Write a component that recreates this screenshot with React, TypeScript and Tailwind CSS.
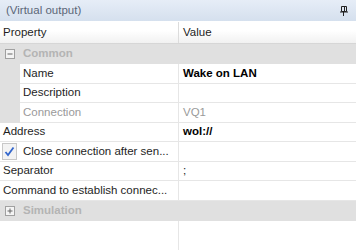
import React from 'react'

type Row = {
  label: string
  value?: string
  bold?: boolean
  indent?: boolean
  dim?: boolean
  check?: boolean
}

const font = { fontFamily: '"Liberation Sans", Arial, sans-serif' }

function Group({ label, open }: { label: string; open: boolean }) {
  return (
    <div className="flex h-[20px] items-center bg-[#e0e0e0] pl-[5px]">
      <span className="flex h-[10px] w-[10px] items-center justify-center border border-[#a0a0a0] bg-[#f4f4f4]">
        <svg width="8" height="8" viewBox="0 0 8 8">
          <path d="M1.5 4h5" stroke="#666" strokeWidth="1" />
          {!open && <path d="M4 1.5v5" stroke="#666" strokeWidth="1" />}
        </svg>
      </span>
      <span className="ml-[8px] text-[11.5px] font-bold text-[#b4b4b4]">{label}</span>
    </div>
  )
}

function PropRow({ row }: { row: Row }) {
  const nameWidth = row.indent ? 'w-[159px] pl-[3px]' : row.check ? 'w-[179px] pl-[2px]' : 'w-[179px] pl-[3px]'
  return (
    <div className="flex h-[19.5px]">
      {row.indent && <div className="w-[20px] shrink-0 bg-[#e0e0e0]" />}
      <div className="flex min-w-0 flex-1 border-b border-[#e6e6e6]">
        <div
          className={`flex shrink-0 items-center gap-[6px] overflow-hidden border-r border-[#e6e6e6] text-[11.5px] whitespace-nowrap ${nameWidth} ${
            row.dim ? 'text-[#9a9a9a]' : 'text-[#1e1e1e]'
          }`}
        >
          {row.check && (
            <span className="flex h-[17px] w-[15px] shrink-0 items-center justify-center border border-[#c8c8c8] bg-[#f3f3f3]">
              <svg width="11" height="11" viewBox="0 0 11 11">
                <path d="M1.5 6 L4 9 L9.5 1.5" fill="none" stroke="#3366cc" strokeWidth="1.8" />
              </svg>
            </span>
          )}
          <span>{row.label}</span>
        </div>
        <div
          className={`flex flex-1 items-center pl-[4px] text-[11.5px] whitespace-nowrap ${
            row.bold ? 'font-bold text-black' : row.dim ? 'text-[#9a9a9a]' : 'text-[#1e1e1e]'
          }`}
        >
          {row.value}
        </div>
      </div>
    </div>
  )
}

export default function App() {
  const common: Row[] = [
    { label: 'Name', value: 'Wake on LAN', bold: true, indent: true },
    { label: 'Description', indent: true },
    { label: 'Connection', value: 'VQ1', indent: true, dim: true },
  ]
  const top: Row[] = [
    { label: 'Address', value: 'wol://', bold: true },
    { label: 'Close connection after sen...', check: true },
    { label: 'Separator', value: ';' },
    { label: 'Command to establish connec...' },
  ]

  return (
    <div className="h-[250px] w-[356px] overflow-hidden bg-white" style={font}>
      {/* title bar */}
      <div className="flex h-[22px] items-center justify-between border-b border-white bg-gradient-to-b from-[#e6edf7] to-[#d5e0ee] pl-[6px] pr-[8px]">
        <span className="text-[11.5px] text-[#5b6677]">(Virtual output)</span>
        <svg width="8" height="10" viewBox="0 0 8 10">
          <path d="M1.5 0.5h5v5h-5z" fill="none" stroke="#222" strokeWidth="1" />
          <path d="M4.5 1v4" stroke="#222" strokeWidth="1" />
          <path d="M0 6h8" stroke="#222" strokeWidth="1" />
          <path d="M3.5 6v4" stroke="#222" strokeWidth="1" />
        </svg>
      </div>

      {/* header */}
      <div className="flex h-[22px] border-b border-[#d6d6d6] bg-gradient-to-b from-white from-40% to-[#f1f1f1] text-[11.5px] text-[#1e1e1e]">
        <div className="flex w-[179px] items-center border-r border-[#dcdcdc] pl-[3px]">Property</div>
        <div className="flex flex-1 items-center pl-[4px]">Value</div>
      </div>

      <Group label="Common" open />
      {common.map((r) => (
        <PropRow key={r.label} row={r} />
      ))}
      {top.map((r) => (
        <PropRow key={r.label} row={r} />
      ))}
      <Group label="Simulation" open={false} />
      <div className="flex h-[40px]">
        <div className="w-[179px] border-r border-[#e6e6e6]" />
      </div>
    </div>
  )
}
